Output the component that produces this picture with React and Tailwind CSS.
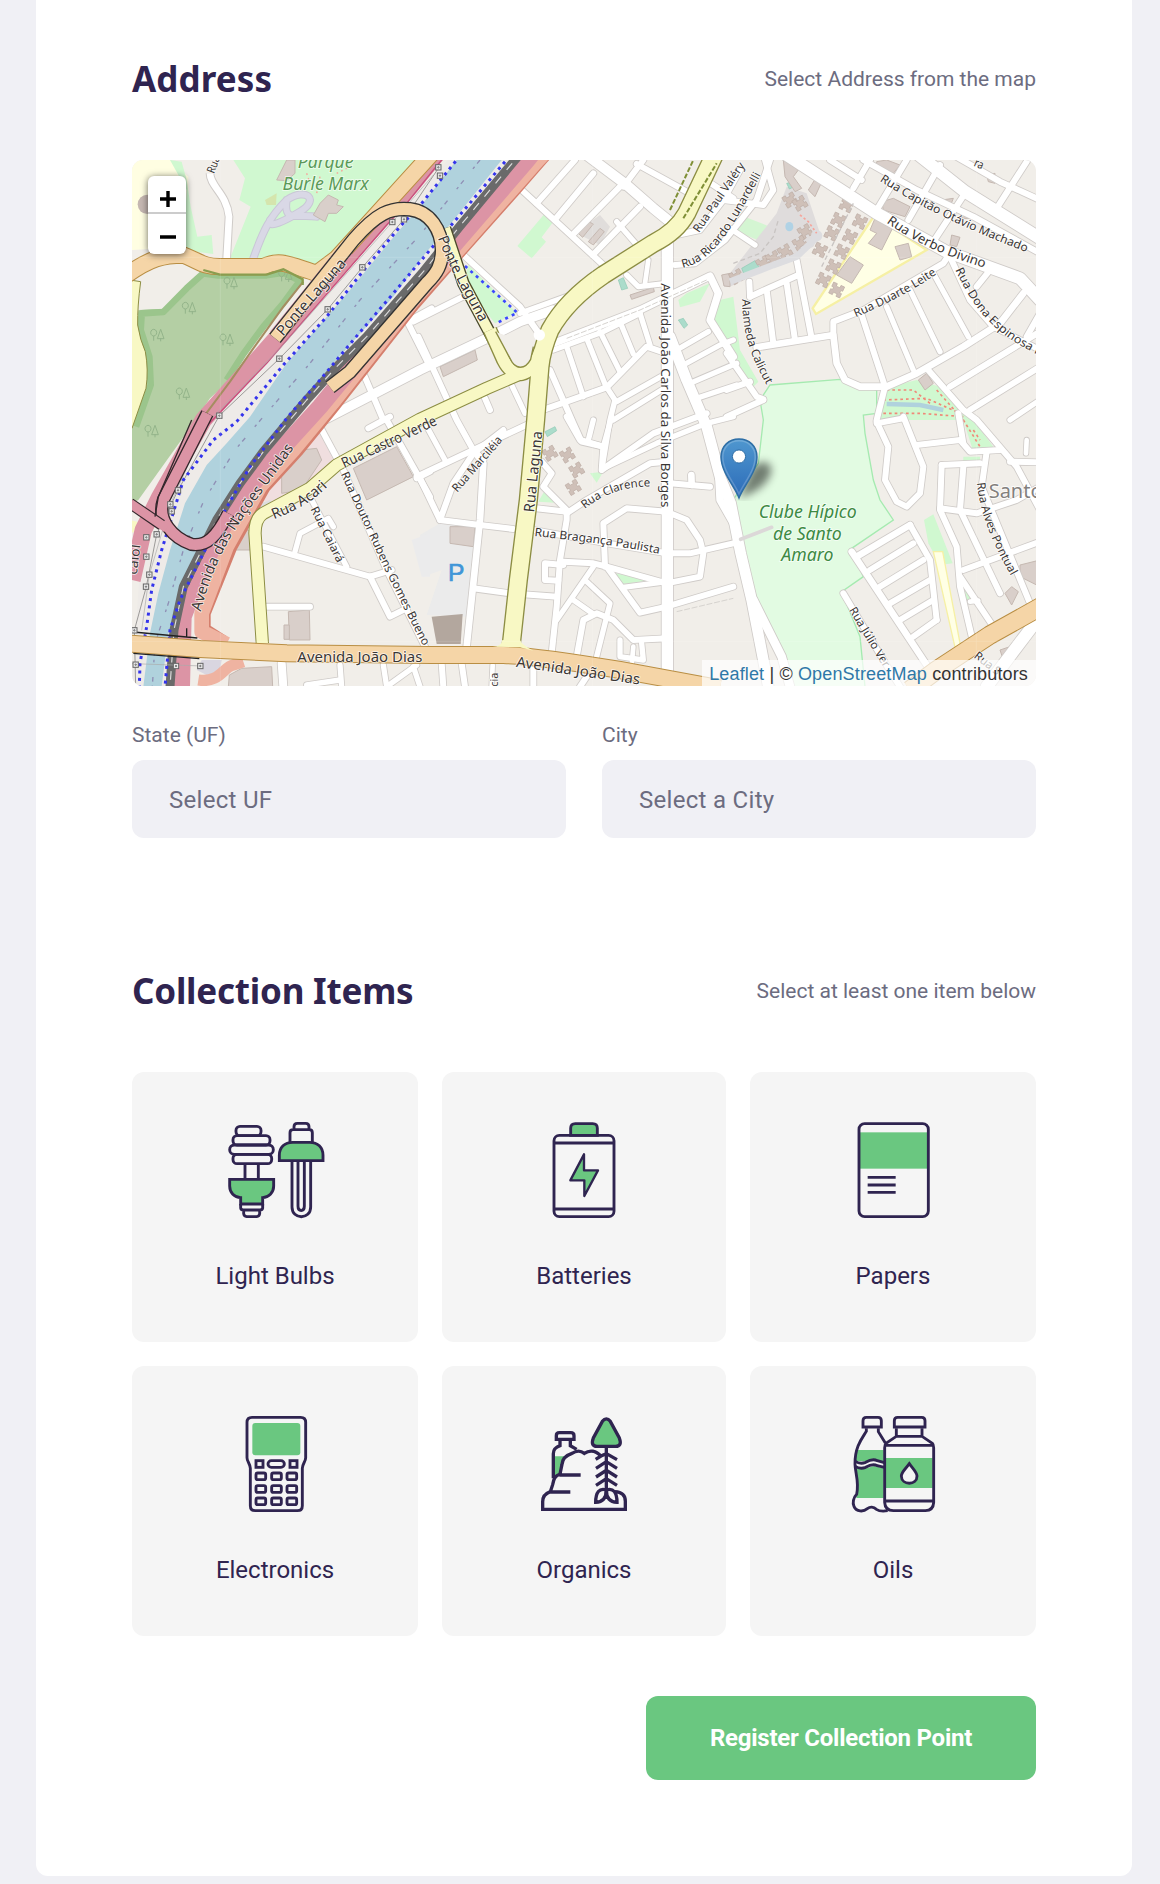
import React from "react";

const INK = "#2f2450";
const GREEN = "#6ac780";

/* ---------- street map ---------- */

const STREETS = [
  // north-west blocks
  [18, "1200,115 1450,345"], [18, "1365,30 1250,160"], [18, "1420,70 1308,205"], [18, "1500,110 1362,250"],
  [18, "1560,170 1418,315"], [16, "1490,215 1555,290"], [18, "1570,30 1510,110"], [18, "1550,42 1700,125"],
  [18, "1750,85 1840,145"], [18, "1030,315 1200,470 1260,555"], [18, "880,515 1030,440"],
  [28, "620,805 900,660 1110,560 1200,515 1300,480"], [16, "1200,490 1380,425"],
  [22, "1300,580 1560,480 1770,378 1795,430 1770,510 1840,620"], [16, "1520,375 1555,410 1640,400"],
  [14, "1585,330 1575,400"], [30, "1400,15 1520,105 1600,175 1680,240"],
  [16, "1300,600 1450,545 1560,490"], [16, "1340,590 1390,740"], [16, "1400,565 1460,715"], [16, "1440,545 1500,665"],
  [16, "1500,515 1540,612"], [16, "1560,490 1590,585"], [18, "1240,790 1460,712 1580,590 1640,610"],
  [16, "1460,712 1485,750 1470,810 1445,960"], [16, "1490,755 1640,670"], [16, "1480,810 1640,710"],
  [18, "1290,660 1360,820 1385,875 1450,890"], [18, "895,560 1010,810 1060,900 1090,930"], [16, "1170,695 1215,790"],
  [18, "1095,745 1110,780"], [18, "730,670 790,810"], [18, "935,475 862,515 930,650"],
  [16, "1670,600 1765,545"], [16, "1690,645 1800,585 1840,570"], [16, "1710,700 1850,640"], [16, "1730,745 1850,705"],
  [18, "1665,345 1725,340 1815,270 1910,150 1940,60 1950,30"], [18, "1670,255 1740,240 1810,150 1860,60"],
  // north-east blocks
  [18, "2230,30 2390,120 2560,200 2760,310"], [36, "2000,15 2270,190 2480,305 2700,385 2760,450"],
  [36, "2390,10 2535,125 2760,265"], [18, "2500,15 2640,95 2760,150"], [18, "2130,30 2225,90"],
  [18, "2360,30 2270,180"], [18, "2250,30 2200,115"], [18, "2460,45 2365,210"], [18, "2535,130 2440,275"],
  [18, "2720,35 2630,175"], [18, "2030,330 2075,565"], [18, "1890,440 2035,375"], [18, "1888,395 1890,440"],
  [18, "1940,420 1960,580"], [18, "2000,400 2025,570"],
  [20, "1910,592 2140,555 2150,640 2175,690 2220,710 2300,710 2390,670 2530,590 2640,520 2710,430"],
  [18, "2140,555 2140,515 2230,480 2470,340 2490,310"], [18, "2225,495 2295,710 2270,810"], [16, "2300,470 2380,660"],
  [16, "2370,420 2460,605"], [16, "2440,370 2545,560"], [18, "2490,320 2550,450 2620,530 2770,605"],
  [18, "2610,360 2570,410"], [18, "2420,655 2530,780 2570,810 2690,950 2760,1080"], [18, "2490,710 2760,545"],
  [18, "2550,780 2760,650"], [16, "2670,810 2760,750"], [18, "2720,560 2760,490"],
  [18, "1820,610 1910,740 1930,748"], [18, "1820,720 1890,695"], [18, "1820,800 1930,750"],
  [18, "1810,150 1930,165 1960,120 1935,30"], [16, "1830,235 1905,285"],
  // south centre
  [18, "960,1110 1080,1125 1180,1137"], [18, "1240,1140 1460,1180 1640,1210 1710,1210 1840,1180"],
  [18, "890,980 1060,900 1240,815"], [18, "900,985 960,1110 1000,1000 1060,910 1150,840"],
  [20, "1060,900 1090,940 1080,1110 1040,1490"], [16, "915,820 975,930"],
  [18, "1060,1315 1170,1330 1310,1340"], [18, "1250,1075 1340,1085 1340,1110 1320,1230 1310,1370 1295,1510"],
  [18, "1265,935 1295,970 1270,1010 1340,1080"], [18, "1340,1090 1400,1050 1590,940 1640,935"],
  [18, "1340,800 1380,870 1450,890 1445,960 1600,850 1760,790"], [16, "1475,800 1450,890"], [16, "1420,810 1405,870"],
  [16, "1450,955 1610,880 1760,820 1840,800"], [18, "1650,1000 1770,1010"], [20, "1715,1005 1714,975"],
  [18, "1455,1250 1450,1120 1520,1075 1640,1085 1700,1110 1740,1170 1750,1210 1740,1280 1640,1300 1460,1250 1420,1240 1330,1235"],
  [18, "1330,1245 1275,1240 1275,1290 1315,1292"], [18, "1460,1250 1560,1388 1640,1370 1840,1310"],
  [16, "1510,1312 1640,1295"], [16, "1420,1250 1310,1410"], [16, "1400,1295 1470,1360 1430,1520"],
  [16, "1360,1350 1420,1392"], [18, "1370,1520 1390,1410 1430,1390 1480,1410 1540,1470 1640,1465"],
  [16, "1500,1470 1500,1520 1570,1530 1565,1480"], [14, "1540,1490 1535,1545"],
  [18, "965,1540 970,1610"], [18, "1025,1540 1035,1610"], [14, "1118,1545 1115,1610"], [18, "1240,1550 1240,1610"],
  [18, "1400,1580 1380,1610"],
  // south-west
  [18, "600,830 670,960 800,1260 915,1490"], [16, "575,1050 680,1250"], [18, "430,1190 750,1280 815,1260"],
  [18, "750,1280 810,1400 860,1375"], [16, "525,1205 540,1150 625,1105 640,1130"], [18, "440,1370 570,1370"],
  [18, "800,810 930,1040"], [18, "745,835 810,800"], [18, "890,985 930,965"], [24, "485,1540 490,1610"],
  [16, "660,1545 665,1610"], [16, "790,1545 800,1610 890,1545"], [16, "560,1605 660,1590"], [16, "880,1550 900,1610"],
  // south-east
  [18, "2270,815 2305,890 2295,990 2330,1055 2360,1070 2400,1030 2410,950 2350,800"], [18, "2270,820 2350,805"],
  [18, "2390,885 2520,870 2550,905 2640,900"], [18, "2515,790 2530,880"], [18, "2670,935 2760,937"],
  [18, "2600,905 2585,1010 2730,1360"], [18, "2465,945 2580,940"],
  [18, "2465,945 2460,1080 2510,1190 2520,1310 2560,1480"], [18, "2530,950 2520,1080 2640,1330"],
  [18, "2460,1075 2570,1090 2690,1050 2760,1010"], [18, "2530,1260 2760,1175"], [18, "2520,1280 2620,1430"],
  [14, "2550,1355 2575,1352"], [14, "2720,870 2718,910"],
  [20, "2195,1205 2430,1560"], [20, "2370,1125 2210,1220"], [18, "2380,1180 2250,1260"], [18, "2410,1230 2280,1310"],
  [18, "2430,1290 2310,1360"], [18, "2440,1350 2340,1410"], [18, "2450,1410 2380,1460"],
  [18, "2370,1125 2430,1230 2450,1410"], [18, "2170,1330 2290,1530 2340,1610"],
  // avenues
  [34, "1642,250 1642,1575"], [32, "1650,560 1700,690 1760,830 1800,980 1832,1060 1862,1210 1895,1350 1930,1530 1945,1610"],
  [22, "1795,960 1800,1050 1840,1120"], [26, "1900,1350 1985,1520 2010,1610"], [36, "2740,1425 2600,1610"],
];

const RAIL = "1210,0 1178,38 1020,228 910,365 740,560 650,650 560,750 430,905 360,1000 290,1110 245,1200 190,1310 162,1440 150,1610";
const BRIDGE_LOOP = "M465,565 L700,270 C770,190 810,172 870,178 C930,185 965,240 966,300 C966,345 950,370 920,400 L690,665 L630,712";
const PINK_LOOP = "M262,790 L130,1050 C110,1110 160,1165 215,1183 C260,1190 290,1160 325,1090";

const BUILDINGS = [
  "470,90 500,30 525,30 525,70 500,92", "600,160 625,135 655,150 650,165 670,170 650,190 625,190 615,215 580,195",
  "960,650 1065,600 1072,630 970,680", "1375,250 1405,215 1420,222 1388,262", "1405,275 1440,235 1453,245 1420,285",
  "1530,435 1600,412 1603,425 1535,448", "1805,375 1830,370 1830,410 1812,408",
  "700,955 830,890 880,980 740,1050", "485,970 545,900 590,895 605,930 545,1020 485,1030", "345,1145 390,1140 395,1200 345,1200",
  "505,1385 568,1380 570,1470 508,1470", "492,1425 508,1425 508,1468 492,1468", "990,1130 1065,1130 1060,1190 990,1180",
  "365,1555 455,1550 458,1610 325,1610 328,1575", "2150,375 2190,320 2230,345 2195,400",
  "2265,205 2320,230 2285,300 2245,280 2270,250 2250,240", "2325,290 2365,280 2375,320 2340,330",
  "2285,155 2320,145 2370,170 2355,200 2290,180", "2495,255 2520,262 2510,290 2490,285", "2395,690 2420,670 2440,700 2415,720",
  "1990,30 2035,60 2020,80 2045,115 2025,125 1995,80", "2065,120 2090,80 2110,85 2085,140", "2700,1245 2760,1230 2760,1310 2700,1280",
  "2655,1330 2675,1310 2695,1325 2675,1365", "2640,1500 2670,1490 2650,1530", "2600,75 2625,70 2625,100 2605,95",
  "2465,150 2500,145 2490,170", "2530,190 2550,185 2550,205 2525,205", "2270,35 2300,30 2340,45 2320,70 2270,50",
];

const HOUSES = [
  [2010, 150], [2040, 160], [2180, 165, 25], [2155, 210, 25], [2135, 250, 25], [2100, 300, 25], [2220, 215, 25], [2190, 260, 25],
  [2165, 305, 25], [2140, 350, 25], [2110, 390, 25], [2150, 420, 25], [2055, 245], [2040, 280], [1930, 340], [1960, 325], [1995, 305], [1850, 380],
  [1290, 910], [1342, 915], [1370, 960], [1360, 1012],
];

const TREES = [[332, 400], [207, 475], [112, 556], [320, 570], [189, 732], [95, 844], [496, 378]];

const PYLONS = [
  [817, 216], [852, 208], [727, 352], [623, 478], [478, 626], [298, 797], [955, 52], [960, 77], [174, 1021], [151, 1063],
  [155, 1084], [110, 1153], [79, 1162], [79, 1220], [88, 1274], [78, 1310], [43, 1441], [47, 1544], [168, 1548], [241, 1548],
];

const LABELS = [
  ["Ponte Laguna", 44, "M489,560 L684,338", 290],
  ["Ponte Laguna", 44, "M953,264 C983,342 1028,422 1083,522", 285],
  ["Avenida das Nações Unidas", 44, "M242,1385 C277,1250 332,1150 387,1080 L527,887", 570],
  ["Rua Castro Verde", 44, "M673,955 L1001,801", 310],
  ["Rua Acari", 44, "M462,1108 C522,1083 572,1063 630,1003", 190],
  ["Rua Laguna", 44, "M1242,1088 L1268,838", 245],
  ["Avenida João Dias", 44, "M532,1536 L910,1536", 375],
  ["Avenida João Dias", 44, "M1187,1550 L1560,1604", 375],
  ["Avenida João Carlos da Silva Borges", 39, "M1624,400 L1624,1075", 672],
  ["Rua Marciléia", 35, "M1012,1028 L1157,862", 208],
  ["Rua Clarence", 35, "M1394,1077 C1450,1032 1520,1007 1596,1010", 212],
  ["Rua Bragança Paulista", 35, "M1243,1158 C1370,1172 1500,1187 1620,1212", 378],
  ["Rua Doutor Rubens Gomes Bueno", 35, "M662,972 L798,1267 L916,1502", 573],
  ["Rua Caiará", 35, "M571,1077 L653,1242", 182],
  ["Rua Paul Valéry", 35, "M1737,250 L1877,45", 246],
  ["Rua Ricardo Lunardelli", 35, "M1688,354 C1792,332 1852,202 1927,68", 376],
  ["Rua Capitão Otávio Machado", 35, "M2279,92 C2399,172 2549,242 2716,305", 490],
  ["Rua Verbo Divino", 39, "M2299,217 C2389,282 2479,318 2592,353", 326],
  ["Rua Duarte Leite", 35, "M2207,502 C2290,467 2370,427 2450,372", 276],
  ["Rua Dona Espinosa F", 35, "M2506,359 C2558,472 2618,552 2760,617", 370],
  ["Alameda Calicut", 35, "M1866,448 C1868,550 1888,610 1938,702", 270],
  ["Rua Alves Pontual", 35, "M2571,998 C2578,1090 2618,1180 2675,1282", 300],
  ["Rua Júlio Ver", 35, "M2186,1380 L2293,1557", 204],
  ["Rua S", 35, "M2560,1522 L2650,1592", 90],
  ["Rua", 35, "M282,72 L302,20", 52],
  ["cia", 35, "M1135,1610 L1135,1566", 42],
  ["ra", 35, "M2560,47 L2590,60", 28],
  ["caiol", 40, "M50,1275 L62,1180", 90],
];

function Ring({ d, w, color, edge, e = 4, cap = "butt" }) {
  return (
    <g fill="none" strokeLinejoin="round" strokeLinecap={cap}>
      <path d={d} stroke={edge} strokeWidth={w + e * 2} />
      <path d={d} stroke={color} strokeWidth={w} />
    </g>
  );
}

function MapDrawing() {
  return (
    <svg className="block h-full w-full" viewBox="36 30 2712 1578" preserveAspectRatio="none" fontFamily="'Noto Sans', sans-serif">
      <rect x="36" y="30" width="2712" height="1578" fill="#f1eee9" />
      {/* land cover */}
      <polygon points="36,30 150,30 205,80 210,290 36,300" fill="#fffee2" />
      <polygon points="150,30 185,35 200,90 212,170 232,260 275,255 280,312 190,300 200,120" fill="#d0f8d0" />
      <polygon points="340,30 900,30 600,350 330,325 392,170 358,150 375,85" fill="#d0f8d0" />
      <circle cx="82" cy="163" r="29" fill="#c5b7b2" />
      <polygon points="435,150 470,130 468,165 440,165" fill="#d5e5ad" />
      <path d="M400,325 C430,240 450,200 500,150 C560,110 600,150 540,185 C500,210 440,240 450,210 M500,150 C490,220 530,190 590,200" fill="none" stroke="#c9c7d6" strokeWidth="24" strokeLinecap="round" />
      <path d="M400,325 C430,240 450,200 500,150 C560,110 600,150 540,185 C500,210 440,240 450,210 M500,150 C490,220 530,190 590,200" fill="none" stroke="#d9d8e6" strokeWidth="18" strokeLinecap="round" />
      <path d="M560,70 L570,100 M600,80 L590,130 M650,70 L690,50" stroke="#f6a49a" strokeWidth="4" strokeDasharray="5 10" />
      <polygon points="1030,400 1045,345 1190,488 1125,520" fill="#d0f8d0" />
      <polygon points="1192,288 1275,190 1300,215 1265,262 1278,275 1235,325" fill="#d0f8d0" />
      <polygon points="1675,450 1700,430 1770,400 1740,455 1680,472" fill="#d0f8d0" />
      <polygon points="1780,510 1800,450 1840,440 1860,600 1915,695 1900,710 1830,610" fill="#d0f8d0" />
      <polygon points="1860,195 1950,230 1925,275 1840,240" fill="#d4f5d2" />
      <polygon points="1255,1055 1275,1020 1305,1058" fill="#d0f8d0" />
      <polygon points="1410,970 1450,965 1430,998" fill="#d0f8d0" />
      <polygon points="1485,1270 1600,1290 1510,1302" fill="#d0f8d0" />
      <polygon points="1970,190 2000,110 2060,130 2100,250 2080,290 1830,410 1830,370" fill="#dfdcdc" />
      <polygon points="1410,215 1440,195 1470,230 1440,285 1370,250" fill="#e0dddb" />
      <polygon points="2262,198 2420,300 2088,492 2078,475" fill="#ffffe5" stroke="#f6f0a4" strokeWidth="7" />
      <polygon points="1920,750 1950,705 2160,688 2200,702 2270,720 2270,790 2230,795 2235,850 2260,990 2280,1050 2320,1110 2195,1195 2230,1280 2165,1325 2220,1460 2235,1610 2010,1610 1905,1330 1860,1170 1832,1060 1915,940 1930,810" fill="#e2fbe2" stroke="#a5eab0" strokeWidth="4" />
      <polygon points="2290,715 2390,690 2460,710 2560,810 2620,890 2560,905 2530,810 2280,810" fill="#d0f8d0" />
      <path d="M2300,762 L2400,765 L2470,780" stroke="#b0d2dd" strokeWidth="14" fill="none" />
      <path d="M2300,720 L2380,720 L2430,760 M2290,750 L2420,745 L2520,790 M2290,790 L2400,790 L2530,800 M2450,720 L2530,810 M2530,810 L2580,890 M2560,840 L2580,870" stroke="#f08878" strokeWidth="5" strokeDasharray="8 9" fill="none" />
      <polygon points="2412,1110 2440,1093 2498,1240 2460,1245 2425,1180" fill="#d0f8d0" />
      <polygon points="2440,1205 2468,1205 2522,1490 2505,1492" fill="#ffffe5" stroke="#f6f0a4" strokeWidth="4" />
      <polygon points="2530,1300 2560,1350 2540,1350" fill="#d0f8d0" />
      <polygon points="2530,920 2580,920 2580,940 2530,935" fill="#d0f8d0" />
      <polygon points="540,870 600,830 650,930 570,990 460,1060 420,1050 480,960" fill="#f0dedf" />
      <polygon points="385,1070 450,1050 470,1070 400,1130" fill="#dddddf" />
      <polygon points="900,1155 960,1120 1070,1130 1050,1400 920,1395 965,1260 910,1280" fill="#ebebeb" />
      <polygon points="875,1170 930,1150 930,1280 905,1280" fill="#ebebec" />
      <polygon points="935,1400 1028,1392 1022,1482 950,1482" fill="#b3a79e" />
      <g fill="#abdccb" stroke="#8ec9b4" strokeWidth="2">
        <polygon points="1495,390 1510,383 1523,415 1505,420" /><polygon points="1675,510 1690,505 1703,525 1692,535" />
        <polygon points="1275,845 1305,830 1310,842 1282,860" /><polygon points="1865,355 1905,332 1920,355 1875,380" /><polygon points="2000,100 2018,95 2023,110 2008,117" />
      </g>
      <ellipse cx="2008" cy="230" rx="12" ry="14" fill="#b0d2e5" />
      <g fill="#d9cfca" stroke="#c5b8b1" strokeWidth="3">{BUILDINGS.map((p) => <polygon key={p} points={p} />)}</g>
      <g fill="#cfc0b8" stroke="#bdada4" strokeWidth="2">
        {HOUSES.map(([x, y, r = -30]) => <path key={`${x}-${y}`} transform={`translate(${x} ${y}) rotate(${r})`} d="M-18,-18h12v8h12v-8h12v14h-6v8h6v14h-12v-8h-12v8h-12v-14h6v-8h-6z" />)}
      </g>
      {/* woodland */}
      <polygon points="55,480 130,476 200,405 250,362 295,376 440,376 490,360 550,392 500,460 430,540 380,612 330,690 270,745 220,820 55,1050 36,1060 36,830 80,700 75,620 50,530" fill="#b4cfa4" />
      <path d="M48,830 L92,705 L88,620 L62,540 L65,490 L130,486 L200,415 L250,370 L295,376 L440,376 L490,368 L540,392 L490,460 L430,530 L370,612 L320,690" fill="none" stroke="#9bc58c" strokeWidth="20" strokeLinejoin="round" />
      <g fill="none" stroke="#93b48a" strokeWidth="3">
        {TREES.map(([x, y]) => <path key={`${x}-${y}`} transform={`translate(${x} ${y})`} d="M-11,16V2M-11,2a9,10 0 1 1 .1,0M10,18V8M0,10L10,-18L20,10Z" />)}
      </g>
      <path d="M30,390 L62,395 Q52,470 53,525 Q60,570 76,605 Q86,660 78,715 L36,835 L20,830Z" fill="#f8f8c4" stroke="#8c8d43" strokeWidth="3" />
      <polygon points="30,1110 52,1115 45,1145 30,1150" fill="#f8f8c4" />

      {/* minor streets */}
      <Ring d="M270,70 C270,110 320,130 327,200 L320,325" w={20} color="#fff" edge="#cfcbc8" e={3} />
      <g fill="none" strokeLinejoin="round" strokeLinecap="round" stroke="#cfcbc8">
        {STREETS.map(([w, p], i) => <polyline key={i} points={p} strokeWidth={w + 5} />)}
      </g>
      <g fill="none" strokeLinejoin="round" strokeLinecap="round" stroke="#fff">
        {STREETS.map(([w, p], i) => <polyline key={i} points={p} strokeWidth={w} />)}
      </g>
      <path d="M1830,395 L1960,345 L2030,320 L2090,262" fill="none" stroke="#dddde0" strokeWidth="20" strokeLinejoin="round" />
      <circle cx="2090" cy="257" r="17" fill="#dddde0" />
      <path d="M1840,340 L1920,310 L1960,260 L1975,210 M2105,350 L2200,160" fill="none" stroke="#c8c4c2" strokeWidth="4" strokeDasharray="14 9" />
      <path d="M1340,565 L1560,480 L1760,390 M1670,1385 L1840,1345" fill="none" stroke="#d6d3cf" strokeWidth="3" strokeDasharray="18 5" />
      <path d="M2040,195 L2065,215 L2090,250" fill="none" stroke="#f6a49a" strokeWidth="5" strokeDasharray="7 7" />
      <path d="M1862,1168 L1955,1132" stroke="#dcd8d8" strokeWidth="11" strokeLinecap="round" />
      <path d="M1035,348 L1192,488 L1125,522" fill="none" stroke="#3b48ff" strokeWidth="8" strokeDasharray="9 13" />

      {/* river corridor */}
      <polygon points="1010,0 1215,0 900,400 640,680 510,830 400,980 300,1130 230,1290 170,1450 165,1610 36,1610 60,1250 130,1090 230,860 430,640 800,220 930,90" fill="#eeebe8" />
      <polygon points="1034,0 1010,30 905,165 830,250 690,420 500,640 390,800 320,880 260,945 195,1060 150,1200 115,1330 90,1450 70,1610 125,1610 145,1450 190,1330 245,1200 320,1070 400,945 500,815 640,640 820,440 920,305 985,230 1145,30 1170,0" fill="#b0d2dd" />
      <polyline points="1080,30 900,255 720,450 570,640 430,800 345,900 250,1055 190,1200 145,1360 105,1480 97,1610" fill="none" stroke="#8f8fb5" strokeWidth="4" strokeDasharray="14 12 8 44" />
      <g fill="none" strokeLinejoin="round">
        <polyline points="1285,0 1258,30 1180,120 1020,300 880,460 640,765 530,900 430,1010 330,1190 250,1390 250,1440 310,1478" stroke="#d57f6d" strokeWidth="44" />
        <polyline points="1282,0 1254,30 1176,118 1016,298 876,456 636,760 520,900 420,1010 320,1190 245,1390 245,1445 320,1482" stroke="#efb3a1" strokeWidth="44" />
        <polyline points="1246,0 1222,30 985,305 880,430 600,770 500,880 400,1000 310,1130 240,1270 190,1400 185,1610" stroke="#dc94a5" strokeWidth="50" />
        <polyline points={RAIL} stroke="#6a6a6a" strokeWidth="27" />
        <polyline points={RAIL} stroke="#dcdcdc" strokeWidth="3.5" strokeDasharray="26 26" />
        <polyline points="960,0 870,110 720,280 430,610 330,720 250,810 120,1040 70,1140 36,1290" stroke="#dc94a5" strokeWidth="52" />
        <polyline points="990,0 940,60 860,160 800,225 440,640 230,860" stroke="#c94f7d" strokeWidth="4" />
        <polyline points="550,395 490,470 400,595 330,695 240,815" stroke="#a58d61" strokeWidth="6" />
        <polyline points="955,55 852,208 727,352 623,478 478,626 298,797 174,1021 110,1153 79,1310 43,1441 47,1610" stroke="#9c9a98" strokeWidth="3" />
        <polyline points="940,75 817,216 480,595 260,820 151,1063 88,1274 65,1441" stroke="#aaa" strokeWidth="2" />
        <polyline points="36,1541 250,1548" stroke="#aaa" strokeWidth="2" />
        <g stroke="#3434ec" strokeWidth="9" strokeDasharray="9 13">
          <polyline points="1035,0 1010,30 905,160 840,230 740,350 620,500 490,645 350,815 280,870 190,990 150,1120 125,1200 95,1320 80,1430 60,1540 58,1610" />
          <polyline points="1155,35 990,230 900,335 820,430 700,570 600,690 500,805 390,950 310,1090 260,1190 180,1350 150,1440 135,1610" />
        </g>
      </g>
      <polygon points="245,1530 305,1530 300,1560 270,1580 230,1560" fill="#d9d6e0" />
      <path d="M235,1590 C300,1600 310,1550 340,1545 L370,1535" fill="none" stroke="#efb3a1" strokeWidth="34" />

      {/* classified roads */}
      <Ring d="M20,375 C90,325 130,315 190,315 C240,335 250,350 300,350 L430,350 C480,325 510,345 590,370 L650,325 L945,0" w={46} color="#f5d5a7" edge="#b98e43" e={3} />
      <path d="M250,360 L300,374 L440,374 L490,358 L548,388 L548,405" fill="none" stroke="#8a9d4f" strokeWidth="7" />
      <path d="M470,560 L680,300" stroke="#dc94a5" strokeWidth="50" />
      <Ring d={PINK_LOOP} w={32} color="#dc94a5" edge="#33262b" />
      <path d="M30,1060 L125,1125" stroke="#33262b" strokeWidth="34" /><path d="M30,1060 L140,1135" stroke="#dc94a5" strokeWidth="27" />
      <path d="M215,810 L115,1040 L105,1100" fill="none" stroke="#33262b" strokeWidth="4" />
      <Ring d="M975,235 L1030,400 L1110,550 L1165,655" w={30} color="#f8f8c4" edge="#4b4a2b" />
      <Ring d={BRIDGE_LOOP} w={36} color="#f5d5a7" edge="#333" />
      <path d="M1110,540 L1150,630 C1180,690 1230,690 1262,600" fill="none" stroke="#8c8d43" strokeWidth="44" />
      <Ring d="M1262,645 L1100,715 L900,808 L650,945 L570,1015 L430,1090 Q405,1105 405,1150 L427,1480" w={34} color="#f8f8c4" edge="#8c8d43" e={3} />
      <Ring d="M1790,0 L1700,190 Q1670,245 1600,280 L1450,375 Q1340,450 1290,540 Q1265,600 1260,650 L1247,810 L1225,1050 L1195,1290 L1172,1500" w={50} color="#f8f8c4" edge="#8c8d43" e={4} />
      <path d="M1650,180 L1720,30 M1690,205 L1790,40" stroke="#7f8f36" strokeWidth="6" strokeDasharray="15 6" />
      <path d="M1110,540 L1150,630 C1180,690 1230,690 1262,600" fill="none" stroke="#f8f8c4" strokeWidth="36" />
      <path d="M1127,545 L1170,625 C1185,660 1215,660 1232,628 L1240,590" fill="#f1eee9" stroke="#8c8d43" strokeWidth="4" />
      <path d="M1175,560 L1235,590" stroke="#fff" strokeWidth="0" />
      <circle cx="1258" cy="555" r="17" fill="#fff" />
      <Ring d="M20,1480 L240,1497 L500,1510 L930,1515 L1150,1515 Q1250,1518 1500,1560 L1800,1615" w={48} color="#f5d5a7" edge="#b98e43" e={3} />
      <Ring d="M2780,1360 L2610,1455 L2450,1560 L2370,1620" w={52} color="#f5d5a7" edge="#b98e43" e={3} />
      <path d="M1147,1470 Q1145,1490 1118,1490 L1200,1492 L1240,1502 Q1205,1485 1200,1470Z" fill="#f8f8c4" />
      <path d="M40,1446 L232,1464 M40,1510 L238,1526 M200,1435 L200,1462" fill="none" stroke="#222" strokeWidth="4" />
      <g fill="#e8e8e8" stroke="#666" strokeWidth="3">
        {PYLONS.map(([x, y]) => <g key={`${x}-${y}`}><rect x={x - 8} y={y - 8} width="16" height="16" /><circle cx={x} cy={y} r="2" /></g>)}
      </g>

      <path d="M301,30V1608 M1417,30V1608 M2569,30V1608 M36,322H2748 M36,1474H2748" stroke="#fff" strokeWidth="1.5" opacity=".25" />

      {/* names */}
      <g fill="#3a3634" stroke="#fff" strokeOpacity=".75" strokeWidth="5" paintOrder="stroke" strokeLinejoin="round">
        {LABELS.map(([text, size, d, len], i) => (
          <React.Fragment key={i}>
            <path id={`street-${i}`} d={d} fill="none" stroke="none" />
            <text fontSize={size}><textPath href={`#street-${i}`} textLength={len} lengthAdjust="spacingAndGlyphs">{text}</textPath></text>
          </React.Fragment>
        ))}
      </g>
      <g fill="#5a9a58" stroke="#fff" strokeOpacity=".7" strokeWidth="5" paintOrder="stroke" fontStyle="italic" fontSize="53" textAnchor="middle">
        <text x="617" y="54">Parque</text><text x="617" y="119">Burle Marx</text>
      </g>
      <g fill="#3d8a43" stroke="#fff" strokeOpacity=".7" strokeWidth="5" paintOrder="stroke" fontStyle="italic" fontSize="53" textAnchor="middle">
        <text x="2063" y="1104">Clube Hípico</text><text x="2062" y="1169">de Santo</text><text x="2062" y="1234">Amaro</text>
      </g>
      <text x="2606" y="1044" fontSize="60" fill="#83807d" stroke="#fff" strokeWidth="5" paintOrder="stroke">Santo</text>
      <text x="984" y="1293" fontSize="74" fill="#4096d8" stroke="#4096d8" strokeWidth="2" fontFamily="'Liberation Sans', Arial, sans-serif">P</text>
    </svg>
  );
}

function Pin() {
  return (
    <svg className="absolute left-[588px] top-[277px] h-[64px] w-[72px]" viewBox="0 0 72 64">
      <defs>
        <linearGradient id="pin" x1="0" y1="0" x2="0" y2="1"><stop offset="0" stopColor="#4f97cf" /><stop offset="1" stopColor="#2c6bb8" /></linearGradient>
        <filter id="soft" x="-50%" y="-50%" width="200%" height="200%"><feGaussianBlur stdDeviation="4" /></filter>
      </defs>
      <path d="M19,61 L32,31 C40,22 53,24 51,35 C48,48 34,56 19,61Z" fill="#000" opacity=".5" filter="url(#soft)" />
      <path d="M19,61 C15,50 1,35 1,20 C1,9 9,2 19,2 C29,2 37,9 37,20 C37,35 23,50 19,61Z" fill="url(#pin)" stroke="#2e6ea6" strokeWidth="1.4" />
      <path d="M19,57 C15,47 2.8,34 2.8,20 C2.8,10 10,3.8 19,3.8 C28,3.8 35.2,10 35.2,20 C35.2,34 23,47 19,57Z" fill="none" stroke="#fff" strokeOpacity=".2" strokeWidth="1.5" />
      <circle cx="19" cy="19.5" r="6.6" fill="#fff" stroke="#2e6ea6" strokeWidth="1" />
    </svg>
  );
}

function LeafletMap() {
  return (
    <div className="relative h-[526px] w-full overflow-hidden rounded-[11px]">
      <MapDrawing />
      <Pin />
      <div className="absolute left-4 top-4 flex h-[78px] w-[38px] flex-col overflow-visible rounded-[6px] bg-white shadow-[0_1px_7px_rgba(0,0,0,0.6)]">
        <button className="flex h-[38px] items-center justify-center border-b-2 border-[#ccc] pt-[10px] pl-[2px]" aria-label="Zoom in">
          <svg width="16" height="16" viewBox="0 0 16 16"><path d="M8 0v16M0 8h16" stroke="#000" strokeWidth="3.4" /></svg>
        </button>
        <button className="flex h-[40px] items-center justify-center pt-[6px] pl-[2px]" aria-label="Zoom out">
          <svg width="16" height="4" viewBox="0 0 16 4"><path d="M0 2h16" stroke="#000" strokeWidth="3.6" /></svg>
        </button>
      </div>
      <div className="absolute bottom-0 right-0 flex h-[26px] w-[334px] items-center justify-end whitespace-pre bg-white/70 pt-[2px] pr-[8px] font-['Liberation_Sans',Arial,sans-serif] text-[18px] tracking-[0.15px] text-[#333]">
        <span className="text-[#2f78a8]">Leaflet</span> | © <span className="text-[#2f78a8]">OpenStreetMap</span> contributors
      </div>
    </div>
  );
}

/* ---------- item icons ---------- */

function Icon({ box, children, w = 8.6 }) {
  return (
    <svg className="h-24 w-24 overflow-visible" viewBox={box} fill="none" stroke={INK} strokeWidth={w}>{children}</svg>
  );
}

const Bulbs = () => (
  <Icon box="35 36 288 288">
    <rect x="62" y="49" width="75" height="28" rx="12" />
    <rect x="53" y="77" width="111" height="28" rx="12" />
    <rect x="43" y="105" width="131" height="28" rx="14" />
    <rect x="53" y="133" width="116" height="28" rx="12" />
    <path d="M89,161V207M129,161V207" />
    <path d="M43,208H175V228C175,248 160,262 142,263V282H76V263C57,262 43,248 43,228Z" fill={GREEN} />
    <path d="M76,282V294Q77,300 84,300H134Q141,300 142,294V282M85,300V311Q86,319 94,320H124Q132,319 133,311V300" />
    <path d="M236,59V50Q236,40 246,40H271Q281,40 281,50V59M224,97V68Q224,59 233,59H282Q291,59 291,68V97" />
    <path d="M192,152V136C192,112 208,97 232,97H283C307,97 323,112 323,136V152Z" fill={GREEN} />
    <path d="M230,154V291C230,330 286,330 286,291V154M248,154V289C248,306 267,306 267,289V154" />
  </Icon>
);

const Battery = () => (
  <Icon box="963 36 288 288">
    <path d="M1067,76V55Q1067,41 1081,41H1133Q1147,41 1147,55V76Z" fill={GREEN} />
    <rect x="1017" y="76" width="180" height="244" rx="16" />
    <path d="M1017,99H1197M1017,297H1197" />
    <path d="M1107,133V181H1149L1108,258V211H1066Z" fill={GREEN} strokeWidth="7" strokeLinejoin="round" />
  </Icon>
);

const Paper = () => (
  <Icon box="16 36 288 288">
    <rect x="60" y="67" width="203" height="109" fill={GREEN} stroke="none" />
    <rect x="58" y="41" width="208" height="279" rx="17" />
    <path d="M84,202H168M84,225H168M84,247H168" />
  </Icon>
);

const Calculator = () => (
  <Icon box="-10 33 288 288">
    <path d="M65,37H211Q226,37 226,52V158C226,170 216,177 216,190V302Q216,317 201,317H75Q60,317 60,302V190C60,177 50,170 50,158V52Q50,37 65,37Z" />
    <rect x="66" y="54" width="144" height="97" rx="9" fill={GREEN} stroke="none" />
    <rect x="77" y="167" width="21" height="20" /><rect x="179" y="167" width="21" height="20" />
    <rect x="113" y="167" width="49" height="20" rx="10" />
    {[204, 242, 279].map((y) => [77, 124, 170].map((x) => <rect key={`${x}-${y}`} x={x} y={y} width="29" height="20" rx="5" />))}
  </Icon>
);

const Compost = () => (
  <Icon box="918 33 288 288" w={10}>
    <path d="M974,154H1003C990,165 996,185 987,207L974,217Z" fill={GREEN} stroke="none" />
    <path d="M979,103V92Q979,83 988,83H1022Q1032,83 1032,92V103ZM990,105V122C977,127 970,132 970,146V220M1021,105V122L1040,133" />
    <path d="M1114,155C1098,136 1079,134 1063,145C1049,134 1035,139 1026,145C1008,151 997,161 996,178L990,207C973,213 971,224 968,239L961,260C945,266 938,276 938,290V313H1186V289C1186,270 1174,261 1155,260M988,210H1052M960,261H1021" />
    <path d="M1117,49Q1129,34 1141,49L1168,99Q1177,124 1157,124H1101Q1081,124 1090,99Z" fill={GREEN} />
    <path d="M1129,126V275M1097,163L1113,153L1129,146L1161,164M1098,190L1129,170L1161,190M1098,216L1129,196L1161,216M1098,241L1129,221L1161,241" />
    <path d="M1129,255C1108,248 1097,262 1097,292C1118,291 1129,279 1129,255C1150,248 1161,262 1161,292C1140,291 1129,279 1129,255Z" />
  </Icon>
);

const Oil = () => (
  <Icon box="16 33 288 288">
    <path d="M51,135H132V169L103,165L75,169L46,168ZM46,184L74,191L103,183L132,190V279H50L55,230Z" fill={GREEN} stroke="none" />
    <rect x="136" y="159" width="143" height="90" fill={GREEN} stroke="none" />
    <path d="M70,66V47Q70,37 80,37H115Q125,37 125,47V66ZM164,66V47Q164,37 174,37H246Q256,37 256,47V66Z" />
    <path d="M80,70V79C68,99 45,125 46,178C47,207 59,229 51,268C41,278 38,294 43,304C50,321 71,321 83,311C91,305 102,305 110,313C119,319 132,319 144,317M116,70V80L137,114" />
    <path d="M47,169C59,177 68,176 78,172C91,164 102,161 113,167L134,173M47,184C59,192 68,191 78,187C91,179 102,176 113,182L134,187" />
    <path d="M170,70V94L139,115Q135,119 135,128V292Q136,316 161,317H257Q281,316 282,292V128Q282,119 278,115L247,94V70M170,94H247M137,121H281M136,288H281" />
    <path d="M209,176C196,194 185,202 185,213C186,242 232,242 232,213C232,202 220,192 209,176Z" fill="#f5f5f5" />
  </Icon>
);

const ITEMS = [
  ["Light Bulbs", Bulbs], ["Batteries", Battery], ["Papers", Paper],
  ["Electronics", Calculator], ["Organics", Compost], ["Oils", Oil],
];

/* ---------- form ---------- */

function Legend({ title, hint, tracking }) {
  return (
    <div className="flex h-[42px] items-center justify-between">
      <h2 className={`font-['Noto_Sans',sans-serif] text-[35px] leading-[42px] font-bold text-[#2f2450] ${tracking}`}>{title}</h2>
      <span className="text-[21px] leading-[25px] text-[#6c6c80]">{hint}</span>
    </div>
  );
}

function Field({ label, placeholder }) {
  return (
    <label className="flex flex-1 flex-col gap-[12px]">
      <span className="text-[21px] leading-[25px] text-[#6c6c80]">{label}</span>
      <span className="flex h-[78px] items-center rounded-xl bg-[#f0f0f5] px-[37px] pt-[2px] text-[24px] leading-7 tracking-[0.3px] text-[#6c6c80]">{placeholder}</span>
    </label>
  );
}

export default function App() {
  return (
    <div className="h-[1884px] overflow-hidden bg-[#f0f0f5] px-9 font-[Roboto,sans-serif]">
      <main className="mr-[-8px] flex h-[1876px] w-[1096px] flex-col rounded-b-xl bg-white px-24 pt-[58px] pb-24">
        <Legend title="Address" hint="Select Address from the map" tracking="tracking-[0.1px]" />
        <div className="mt-[60px]"><LeafletMap /></div>
        <div className="mt-[37px] flex gap-9">
          <Field label="State (UF)" placeholder="Select UF" />
          <Field label="City" placeholder="Select a City" />
        </div>
        <div className="mt-[132px]">
          <Legend title="Collection Items" hint="Select at least one item below" tracking="tracking-[-0.22px]" />
        </div>
        <ul className="mt-[60px] grid grid-cols-[286px_284px_286px] gap-6">
          {ITEMS.map(([name, Art]) => (
            <li key={name} className="flex h-[270px] flex-col items-center rounded-xl bg-[#f5f5f5] pt-[50px]">
              <Art />
              <span className="mt-[44px] text-[24px] leading-7 text-[#2f2450]">{name}</span>
            </li>
          ))}
        </ul>
        <button className="mt-[60px] flex h-[84px] w-[390px] items-center justify-center self-end rounded-xl bg-[#6ac780] text-[24px] font-bold tracking-[-0.24px] text-white">
          Register Collection Point
        </button>
      </main>
    </div>
  );
}
